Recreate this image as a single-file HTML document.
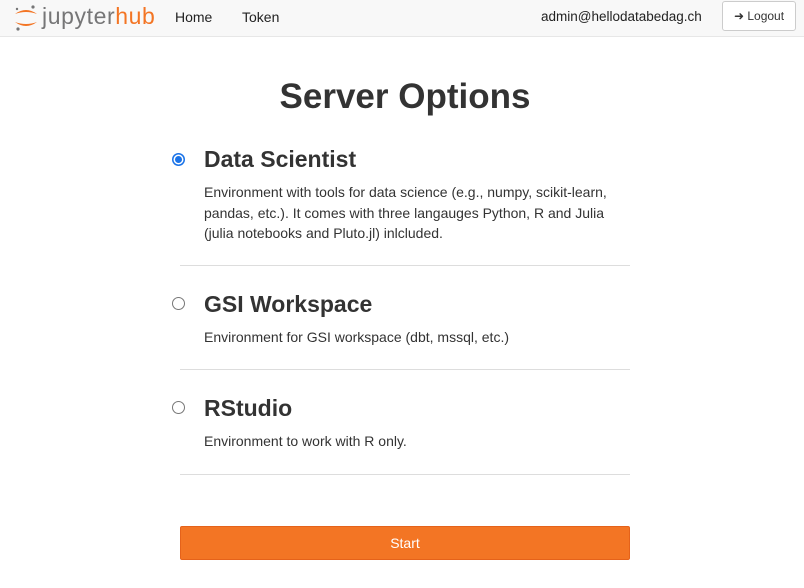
<!DOCTYPE html>
<html><head><meta charset="utf-8"><style>
*{margin:0;padding:0;box-sizing:border-box}
body{width:804px;height:588px;background:#fff;font-family:"Liberation Sans",sans-serif;color:#333;position:relative;overflow:hidden}
.nav{position:absolute;left:0;top:0;width:804px;height:37px;background:#f8f8f8;border-bottom:1px solid #e7e7e7}
.a{position:absolute;white-space:nowrap}
.navl{font-size:14px;color:#222;top:9px}
.btn{position:absolute;left:722px;top:1px;width:74px;height:30px;border:1px solid #ccc;border-radius:3px;background:#fff;font-size:12px;color:#333;text-align:center;line-height:28px}
h1{position:absolute;left:0;width:810px;text-align:center;top:77px;font-size:35px;font-weight:bold;color:#333}
.radio{position:absolute;left:172px;width:13px;height:13px;border-radius:50%;border:1px solid #777;background:#fff}
.radio.on{border:none;background:#1a73e8}
.radio.on::after{content:"";position:absolute;left:3px;top:3px;width:7px;height:7px;border-radius:50%;background:#1a73e8;box-shadow:0 0 0 1.5px #fff}
.h{position:absolute;left:204px;font-size:23px;font-weight:bold;color:#333}
.d{position:absolute;left:204px;font-size:14px;line-height:20.5px;color:#333}
.hr{position:absolute;left:180px;width:450px;height:1px;background:#ddd}
.start{position:absolute;left:180px;top:526px;width:450px;height:34px;background:#f37524;border:1px solid #e5621a;border-radius:2px;color:#fff;font-size:14px;text-align:center;line-height:32px}
</style></head><body>
<div class="nav">
<svg class="a" style="left:13px;top:4px" width="26" height="28" viewBox="0 0 26 28">
<path d="M2 10 Q13 2 24 10 Q13 6 2 10Z" fill="#f37524"/>
<path d="M2 18 Q13 26 24 18 Q13 22 2 18Z" fill="#f37524"/>
<circle cx="20" cy="3" r="1.6" fill="#767677"/><circle cx="4" cy="5" r="1.2" fill="#767677"/><circle cx="5" cy="25" r="1.6" fill="#767677"/>
</svg>
<span class="a" style="left:42px;top:3px;font-size:23px;color:#767677;letter-spacing:0.6px">jupyter<span style="color:#f37524">hub</span></span>
<span class="a navl" style="left:175px">Home</span>
<span class="a navl" style="left:242px">Token</span>
<span class="a navl" style="left:541px;font-size:13.5px">admin@hellodatabedag.ch</span>
<div class="btn">&#10140; Logout</div>
</div>
<h1>Server Options</h1>
<div class="radio on" style="top:153px"></div>
<div class="h" style="top:146px">Data Scientist</div>
<div class="d" style="top:182px">Environment with tools for data science (e.g., numpy, scikit-learn,<br>pandas, etc.). It comes with three langauges Python, R and Julia<br>(julia notebooks and Pluto.jl) inlcluded.</div>
<div class="hr" style="top:265px"></div>
<div class="radio" style="top:297px"></div>
<div class="h" style="top:291px">GSI Workspace</div>
<div class="d" style="top:327px">Environment for GSI workspace (dbt, mssql, etc.)</div>
<div class="hr" style="top:369px"></div>
<div class="radio" style="top:401px"></div>
<div class="h" style="top:395px">RStudio</div>
<div class="d" style="top:431px">Environment to work with R only.</div>
<div class="hr" style="top:474px"></div>
<div class="start">Start</div>
</body></html>
